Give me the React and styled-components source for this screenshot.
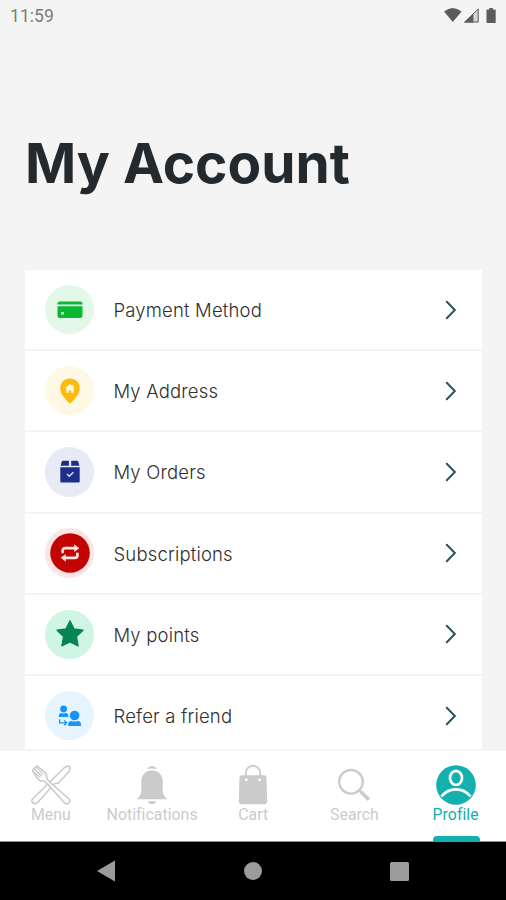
import React from 'react';
import styled, { createGlobalStyle } from 'styled-components';

const GlobalStyle = createGlobalStyle`
	* {
		box-sizing: border-box;
	}

	body {
		margin: 0;
		background: #f4f4f4;
	}

	svg {
		display: block;
	}
`;

const Screen = styled.div`
	display: flex;
	flex-direction: column;
	width: 506px;
	height: 900px;
	overflow: hidden;
	background: #f4f4f4;
	font-family: Inter, 'Liberation Sans', sans-serif;
`;

const StatusBar = styled.header`
	display: flex;
	flex: none;
	align-items: center;
	justify-content: space-between;
	height: 32px;
	padding: 0 8px 0 10px;
`;

const Clock = styled.span`
	font-family: Roboto, sans-serif;
	font-size: 17.6px;
	color: #7c7c7c;
`;

const Title = styled.h1`
	flex: none;
	height: 238px;
	margin: 0;
	padding: 97px 0 0 25px;
	font-size: 55px;
	font-weight: 650;
	line-height: 68px;
	color: #23292d;
	white-space: nowrap;
`;

const AccountList = styled.ul`
	flex: 1;
	min-height: 0;
	margin: 0 24px 0 25px;
	padding: 0;
	overflow: hidden;
	list-style: none;
`;

const AccountRow = styled.li`
	display: flex;
	align-items: center;
	height: 81.2px;
	padding: 0 26px 0 19.5px;
	border-bottom: 2.4px solid #f4f4f4;
	background: #fff;
`;

const Badge = styled.span`
	display: grid;
	place-items: center;
	width: 49.4px;
	height: 49.4px;
	border-radius: 50%;
	background: ${(props) => props.$tint};
`;

const RowLabel = styled.span`
	flex: 1;
	padding: 1px 0 0 19.6px;
	font-size: 18.5px;
	font-weight: 350;
	letter-spacing: 0.17px;
	color: #303030;
	white-space: nowrap;
`;

const TabBar = styled.nav`
	display: grid;
	flex: none;
	grid-template-columns: repeat(5, 101.2px);
	height: 93px;
	border-top: 2px solid #f5f5f5;
	border-bottom: 1px solid #8d8d8d;
	background: #fff;
`;

const Tab = styled.div`
	display: flex;
	flex-direction: column;
	align-items: center;
	padding-top: 14px;
	padding-left: 0.6px;
	color: ${(props) => (props.$active ? '#12b0ae' : '#cbcbcb')};
`;

const TabLabel = styled.span`
	margin-top: 1px;
	font-family: Roboto, sans-serif;
	font-size: 15.8px;
	line-height: 18px;
	letter-spacing: 0.05px;
`;

const TabMarker = styled.span`
	width: 47px;
	height: 6px;
	margin: auto -1px -1px 0;
	border-radius: 4px 4px 0 0;
	background: #12b0ae;
`;

const SystemBar = styled.footer`
	display: flex;
	flex: none;
	align-items: center;
	justify-content: space-between;
	height: 58px;
	padding: 0 97px;
	background: #000;
`;

// Row icons share the 50x50 box of the badge behind them

const CardIcon = () => (
	<svg width="50" height="50" viewBox="0 0 50 50" fill="#0cb832">
		<path d="M12.5 19.4v-.9a2 2 0 0 1 2-2h21a2 2 0 0 1 2 2v.9z" />
		<path d="M12.5 21.2h25v9.6a2.2 2.2 0 0 1-2.2 2.2H14.7a2.2 2.2 0 0 1-2.2-2.2z" />
		<rect x="16" y="27" width="3" height="2.6" fill="#b5ecc1" />
	</svg>
);

const PinIcon = () => (
	<svg width="50" height="50" viewBox="0 0 50 50">
		<path
			d="M25 12.5c-5.7 0-9.8 4.2-9.8 9.6 0 5.9 5 11.3 9.8 15.6 4.8-4.3 9.8-9.7 9.8-15.6 0-5.4-4.1-9.6-9.8-9.6z"
			fill="#fbbc0b"
		/>
		<path
			d="M25 18l-4.8 4.3h1.2v4.5h2.3v-2.6h2.6v2.6h2.3v-4.5h1.2l-1.5-1.4v-2h-1.2v.9z"
			fill="#fffaf0"
		/>
	</svg>
);

const BoxIcon = () => (
	<svg width="50" height="50" viewBox="0 0 50 50" fill="#1c2f8c">
		<path d="M18 13.8h5.9v5h-8.3l1-3.8q.4-1.2 1.4-1.2zM26.2 13.8H32q1 0 1.4 1.2l1 3.8h-8.2z" />
		<path d="M15.3 20.3h19.4v14.2a1 1 0 0 1-1 1H16.3a1 1 0 0 1-1-1z" />
		<path d="M22 27l2.2 2.2 4.2-4" fill="none" stroke="#dfe4f5" strokeWidth="1.5" />
	</svg>
);

const RepeatIcon = () => (
	<svg width="50" height="50" viewBox="0 0 50 50">
		<circle cx="25" cy="25" r="19.8" fill="#c20404" />
		<path
			d="M17.6 24v-1.2a2.6 2.6 0 0 1 2.6-2.6H30M32.4 26v1.2a2.6 2.6 0 0 1-2.6 2.6H20"
			fill="none"
			stroke="#fde4e4"
			strokeWidth="2.8"
			strokeLinecap="round"
		/>
		<path d="M29.2 16.3l5 3.9-5 3.9zM20.8 25.9l-5 3.9 5 3.9z" fill="#fde4e4" />
	</svg>
);

const StarIcon = () => (
	<svg width="50" height="50" viewBox="0 0 50 50">
		<path
			d="M25 10.7l4.1 8.2 8.9 1.3-6.5 6.3 1.7 9.4-8.2-4-8.2 4 1.7-9.4-6.5-6.3 8.9-1.3z"
			fill="#068452"
			stroke="#068452"
			strokeWidth="1.2"
			strokeLinejoin="round"
		/>
	</svg>
);

const ReferIcon = () => (
	<svg width="50" height="50" viewBox="0 0 50 50" fill="#1495fb">
		<circle cx="18.6" cy="18" r="3.4" />
		<path d="M13.9 25.9v-1.2q0-2.6 2.6-2.6 2 1 4.2 0 2.6 0 2.6 2.6v1.2z" />
		<circle cx="29.6" cy="24.5" r="4.8" />
		<path d="M23.2 35v-1.4q0-3.7 3.3-3.7 3.1 1.2 6.2 0 3.3 0 3.3 3.7V35z" />
		<path d="M14.6 28.2v3.6h6.6M19.2 29.4l2.4 2.4-2.4 2.4" fill="none" stroke="#1495fb" strokeWidth="1.3" />
	</svg>
);

const Chevron = () => (
	<svg width="11" height="20" viewBox="0 0 11 20">
		<path d="M1.8 1.8L9.8 10l-8 8.2" fill="none" stroke="#2b5367" strokeWidth="2" strokeLinecap="round" />
	</svg>
);

const MenuIcon = () => (
	<svg width="40" height="40" viewBox="0 0 40 40" fill="#fff" stroke="#cbcbcb" strokeWidth="1.6" strokeLinejoin="round">
		{/* knife */}
		<path d="M1.4 34.2L33.2 2.8q3-2.4 5.2-1.4 1.4 2.8-.8 5.6L27.4 18l-4.2 1L6.4 37.8q-2.6 1.6-4.4 0-2-1.8-.6-3.6z" />
		{/* fork */}
		<path d="M1.4 5.4L6 .9l6.8 5.4q3.6 2.6 3 7.4l3.6 4L38 34q1.6 2.2-.2 4t-4 .2L17 19.4l-4-3.4q-4.6.4-7-3z" />
		<path d="M3 3.8l8 7.4M5 2l7.4 7.4M1.8 6l7.6 6.6" fill="none" strokeWidth="1.2" />
	</svg>
);

const BellIcon = () => (
	<svg width="40" height="40" viewBox="0 0 40 40" fill="#cbcbcb">
		<path d="M15.6 4.2a4.6 4.6 0 0 1 8.8 0q-4.4-1.4-8.8 0z" />
		<path d="M20 5.6c-6.8 0-10.8 4.8-10.8 11.4v9.4q0 3.8-4.4 7.8h30.4q-4.4-4-4.4-7.8V17c0-6.6-4-11.4-10.8-11.4z" />
		<path d="M15.6 36.2h8.8a4.8 4.8 0 0 1-8.8 0z" />
	</svg>
);

const BagIcon = () => (
	<svg width="40" height="40" viewBox="0 0 40 40">
		<path d="M12.8 12V8a7.2 7.2 0 0 1 14.4 0v4" fill="none" stroke="#cbcbcb" strokeWidth="1.8" />
		<path d="M8.6 10.2h22.8q2 0 2.1 2L34.2 36q0 3.2-3.2 3.2H9q-3.2 0-3.2-3.2l.7-23.800q.1-2 2.1-2z" fill="#cbcbcb" />
		<circle cx="13.4" cy="14.8" r="1.4" fill="#fff" />
		<circle cx="26.6" cy="14.8" r="1.4" fill="#fff" />
	</svg>
);

const SearchIcon = () => (
	<svg width="40" height="40" viewBox="0 0 40 40" fill="none" stroke="#cbcbcb">
		<circle cx="17" cy="16.8" r="11.8" strokeWidth="2.4" />
		<path d="M25.4 25.4l2.6 2.6" strokeWidth="2.4" />
		<path d="M27 27l8 7.8" strokeWidth="3.6" />
	</svg>
);

const ProfileIcon = () => (
	<svg width="40" height="40" viewBox="0 0 40 40">
		<circle cx="20" cy="20" r="19.8" fill="#12b0ae" />
		<ellipse cx="20" cy="12.9" rx="6" ry="7.1" fill="none" stroke="#fff" strokeWidth="2.7" />
		<path d="M5.4 31.4q6-7 14.6-7t14.6 7" fill="none" stroke="#fff" strokeWidth="2.6" />
	</svg>
);

const accountItems = [
	{ label: 'Payment Method', tint: '#e4f8ea', icon: CardIcon },
	{ label: 'My Address', tint: '#fff8e4', icon: PinIcon },
	{ label: 'My Orders', tint: '#e8ebf5', icon: BoxIcon },
	{ label: 'Subscriptions', tint: '#fbe5e5', icon: RepeatIcon },
	{ label: 'My points', tint: '#cff5e4', icon: StarIcon },
	{ label: 'Refer a friend', tint: '#e6f4ff', icon: ReferIcon },
];

const tabs = [
	{ label: 'Menu', icon: MenuIcon },
	{ label: 'Notifications', icon: BellIcon },
	{ label: 'Cart', icon: BagIcon },
	{ label: 'Search', icon: SearchIcon },
	{ label: 'Profile', icon: ProfileIcon, active: true },
];

export default function App() {
	return (
		<>
			<GlobalStyle />
			<Screen>
				<StatusBar>
					<Clock>11:59</Clock>
					<svg width="56" height="18" viewBox="0 0 56 18" fill="#5c5c5c">
						<path d="M2 4.4q8.6-7 17.6 0L10.8 15z" />
						<path d="M22 15.4L36.6 1.2v14.2z" fill="#d4d4d4" />
						<path d="M22 15.4l9.4-9.2v9.2z" />
						<path d="M22.8 15L36.2 2v13z" fill="none" stroke="#5c5c5c" />
						<path d="M47.3 1h3.6v1.5h2.2q.6 0 .6.6v12.2q0 .7-.6.7h-8q-.6 0-.6-.7V3.1q0-.6.6-.6h2.2z" />
					</svg>
				</StatusBar>

				<Title>My Account</Title>

				<AccountList>
					{accountItems.map(({ label, tint, icon: Icon }) => (
						<AccountRow key={label}>
							<Badge $tint={tint}>
								<Icon />
							</Badge>
							<RowLabel>{label}</RowLabel>
							<Chevron />
						</AccountRow>
					))}
				</AccountList>

				<TabBar>
					{tabs.map(({ label, icon: Icon, active }) => (
						<Tab key={label} $active={active}>
							<Icon />
							<TabLabel>{label}</TabLabel>
							{active && <TabMarker />}
						</Tab>
					))}
				</TabBar>

				<SystemBar>
					<svg width="18" height="22" viewBox="0 0 18 22">
						<path d="M0 11L18 .6v20.8z" fill="#9b9b9b" />
					</svg>
					<svg width="18" height="18" viewBox="0 0 18 18">
						<circle cx="9" cy="9" r="9" fill="#9b9b9b" />
					</svg>
					<svg width="19" height="19" viewBox="0 0 19 19">
						<rect width="19" height="19" rx="1.5" fill="#9b9b9b" />
					</svg>
				</SystemBar>
			</Screen>
		</>
	);
}
